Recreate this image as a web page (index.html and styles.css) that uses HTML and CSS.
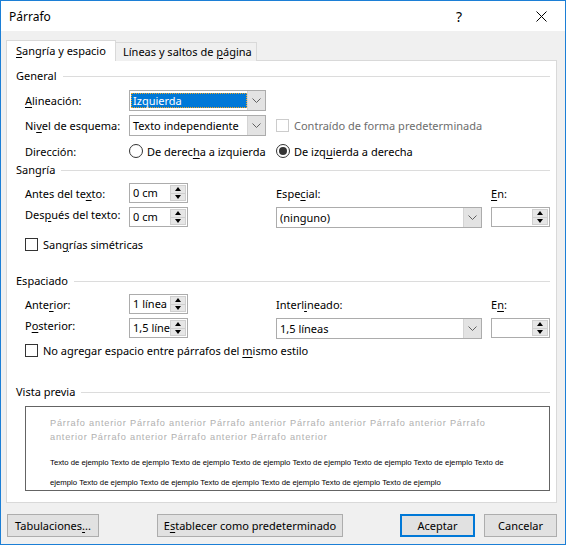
FILE: index.html
```html
<!DOCTYPE html>
<html lang="es">
<head>
<meta charset="utf-8">
<title>Párrafo</title>
<link rel="stylesheet" href="styles.css">
</head>
<body>
<div class="window">
  <div class="titlebar">
    <span class="title">Párrafo</span>
    <span class="help">?</span>
    <span class="close"><svg width="11" height="11" viewBox="0 0 11 11"><path d="M0.5 0.5L10.5 10.5M10.5 0.5L0.5 10.5" stroke="#000" stroke-width="1" fill="none"/></svg></span>
  </div>
  <div class="client">
    <div class="tabs">
      <div class="tab active"><u>S</u>angría y espacio</div>
      <div class="tab">Líneas y saltos de <u>p</u>ágina</div>
    </div>
    <div class="panel">
      <div class="group g-general"><span>General</span><i></i></div>
      <div class="row r-alin">
        <label><u>A</u>lineación:</label>
        <div class="combo w137"><div class="ctext"><span class="sel">Izquierda</span></div><div class="carrow"><svg width="9" height="5" viewBox="0 0 9 5"><path d="M0.5 0.5L4.5 4.5L8.5 0.5" stroke="#606060" fill="none"/></svg></div></div>
      </div>
      <div class="row r-nivel">
        <label>Ni<u>v</u>el de esquema:</label>
        <div class="combo w137"><div class="ctext">Texto independiente</div><div class="carrow"><svg width="9" height="5" viewBox="0 0 9 5"><path d="M0.5 0.5L4.5 4.5L8.5 0.5" stroke="#606060" fill="none"/></svg></div></div>
        <div class="check disabled span2"><span class="box"></span><span>Contraído de forma predeterminada</span></div>
      </div>
      <div class="row r-dir">
        <label>Dirección:</label>
        <div class="radio"><span class="circ"></span><span>De derec<u>h</u>a a izquierda</span></div>
        <div class="radio span2"><span class="circ on"></span><span>De izq<u>u</u>ierda a derecha</span></div>
      </div>
      <div class="group g-sangria"><span>Sangría</span><i></i></div>
      <div class="row r-antes">
        <label>Antes del te<u>x</u>to:</label>
        <div class="spin"><span class="val">0 cm</span><span class="btns"><i class="up"></i><i class="dn"></i></span></div>
        <label>Espe<u>c</u>ial:</label>
        <label><u>E</u>n:</label>
      </div>
      <div class="row r-desp">
        <label>Des<u>p</u>ués del texto:</label>
        <div class="spin"><span class="val">0 cm</span><span class="btns"><i class="up"></i><i class="dn"></i></span></div>
        <div class="combo w206"><div class="ctext">(ninguno)</div><div class="carrow"><svg width="9" height="5" viewBox="0 0 9 5"><path d="M0.5 0.5L4.5 4.5L8.5 0.5" stroke="#606060" fill="none"/></svg></div></div>
        <div class="spin"><span class="val"></span><span class="btns"><i class="up"></i><i class="dn"></i></span></div>
      </div>
      <div class="row r-sim">
        <div class="check span-all"><span class="box"></span><span>San<u>g</u>rías simétricas</span></div>
      </div>
      <div class="group g-esp"><span>Espaciado</span><i></i></div>
      <div class="row r-ant">
        <label>Ante<u>r</u>ior:</label>
        <div class="spin"><span class="val">1 línea</span><span class="btns"><i class="up"></i><i class="dn"></i></span></div>
        <label>Interl<u>i</u>neado:</label>
        <label>E<u>n</u>:</label>
      </div>
      <div class="row r-post">
        <label>P<u>o</u>sterior:</label>
        <div class="spin"><span class="val">1,5 líne</span><span class="btns"><i class="up"></i><i class="dn"></i></span></div>
        <div class="combo w206"><div class="ctext">1,5 líneas</div><div class="carrow"><svg width="9" height="5" viewBox="0 0 9 5"><path d="M0.5 0.5L4.5 4.5L8.5 0.5" stroke="#606060" fill="none"/></svg></div></div>
        <div class="spin"><span class="val"></span><span class="btns"><i class="up"></i><i class="dn"></i></span></div>
      </div>
      <div class="row r-noagr">
        <div class="check span-all"><span class="box"></span><span>No agregar espacio entre párrafos del <u>m</u>ismo estilo</span></div>
      </div>
      <div class="group g-vista"><span>Vista previa</span><i></i></div>
      <div class="preview">
        <div class="pl prev">Párrafo anterior Párrafo anterior Párrafo anterior Párrafo anterior Párrafo anterior Párrafo</div>
        <div class="pl prev">anterior Párrafo anterior Párrafo anterior Párrafo anterior</div>
        <div class="pl sample first">Texto de ejemplo Texto de ejemplo Texto de ejemplo Texto de ejemplo Texto de ejemplo Texto de ejemplo Texto de ejemplo Texto de</div>
        <div class="pl sample">ejemplo Texto de ejemplo Texto de ejemplo Texto de ejemplo Texto de ejemplo Texto de ejemplo Texto de ejemplo</div>
      </div>
    </div>
    <div class="footer">
      <button class="btn b-tab">Tabulaciones<u>.</u>..</button>
      <button class="btn b-est">E<u>s</u>tablecer como predeterminado</button>
      <button class="btn b-ok">Aceptar</button>
      <button class="btn b-cancel">Cancelar</button>
    </div>
  </div>
</div>
</body>
</html>
```

FILE: styles.css
```css
* { box-sizing: border-box; }
html, body { margin: 0; padding: 0; }
body {
  width: 566px;
  height: 545px;
  overflow: hidden;
  font-family: "Noto Sans", "Open Sans", sans-serif;
  font-size: 11px;
  color: #000;
}
u { text-decoration: underline; text-underline-offset: 2px; }
.window {
  width: 566px;
  height: 545px;
  border: 1px solid #1c7fd6;
  background: #f0f0f0;
  display: flex;
  flex-direction: column;
}
.titlebar {
  height: 30px;
  background: #fff;
  display: flex;
  align-items: center;
  padding-left: 8px;
  flex: none;
}
.title { font-size: 12px; flex: 1; margin-top: 1px; }
.help { font-size: 14px; width: 20px; text-align: center; margin-right: 67px; margin-top: 1px; }
.close { width: 11px; height: 11px; margin-right: 18px; display: flex; }

.client { padding: 9px 0 0 5px; }
.tabs {
  display: flex;
  align-items: flex-end;
  height: 21px;
}
.tab {
  height: 19px;
  border: 1px solid #d9d9d9;
  border-bottom: none;
  background: #f0f0f0;
  padding: 0 0 0 7px;
  width: 142px;
  line-height: 17px;
  font-size: 11px;
  white-space: nowrap;
  margin-left: -1px;
}
.tab.active {
  height: 21px;
  width: 110px;
  background: #fff;
  position: relative;
  z-index: 1;
  margin-left: 0;
  padding-left: 9px;
  line-height: 19px;
}
.panel {
  margin-top: -1px;
  width: 551px;
  height: 443px;
  border: 1px solid #d9d9d9;
  background: #fff;
  padding: 0 6px 0 9px;
}
.group {
  display: flex;
  align-items: center;
  height: 16px;
  line-height: 16px;
}
.group span { margin-right: 6px; }
.group i { flex: 1; height: 1px; background: #dcdcdc; }
.g-general { margin-top: 7px; }
.g-sangria { margin-top: 1px; }
.g-esp { margin-top: 21px; }
.g-vista { margin-top: 26px; }

.row {
  display: grid;
  grid-template-columns: 104px 147px 215px 59px;
  align-items: center;
  margin-left: 9px;
}
.row label { white-space: nowrap; }
.r-alin { height: 21px; margin-top: 6px; }
.r-nivel { height: 21px; margin-top: 4px; }
.r-dir { height: 20px; margin-top: 5px; }
.r-antes { height: 20px; margin-top: 5px; }
.r-desp { height: 21px; margin-top: 4px; align-items: start; }
.r-sim { height: 16px; margin-top: 8px; }
.r-ant { height: 20px; margin-top: 5px; }
.r-post { height: 21px; margin-top: 4px; align-items: start; }
.r-noagr { height: 16px; margin-top: 3px; }
.span2 { grid-column: 3 / 5; }
.span-all { grid-column: 1 / 5; }

.combo {
  height: 21px;
  border: 1px solid #acacac;
  background: #fff;
  display: flex;
}
.w137 { width: 137px; }
.w206 { width: 206px; }
.ctext {
  flex: 1;
  padding-left: 3px;
  display: flex;
  align-items: center;
  white-space: nowrap;
  overflow: hidden;
}
.sel {
  display: block;
  width: 117px;
  height: 15px;
  margin-left: -2px;
  line-height: 13px;
  background: #0078d7;
  color: #fff;
  border: 1px dotted #f5a623;
  padding-left: 1px;
}
.carrow {
  width: 18px;
  background: #e3e3e3;
  border-left: 1px solid #d4d4d4;
  display: flex;
  align-items: center;
  justify-content: center;
}

.spin {
  width: 59px;
  height: 20px;
  border: 1px solid #acacac;
  background: #fff;
  display: flex;
}
.spin .val {
  flex: 1;
  padding-left: 3px;
  white-space: nowrap;
  line-height: 18px;
}
.spin .btns {
  width: 16px;
  margin: 1px 1px 1px 0;
  display: flex;
  flex-direction: column;
}
.spin .btns i {
  flex: 1;
  background: #e6e6e6;
  border: 1px solid #cfcfcf;
  display: flex;
  align-items: center;
  justify-content: center;
}
.spin .btns i + i { border-top: none; }
.spin .btns i::after {
  content: "";
  width: 0;
  height: 0;
  border-left: 3.5px solid transparent;
  border-right: 3.5px solid transparent;
}
.spin .btns i.up::after { border-bottom: 4px solid #000; }
.spin .btns i.dn::after { border-top: 4px solid #000; }

.check, .radio {
  display: flex;
  align-items: center;
  white-space: nowrap;
}
.check .box {
  width: 13px;
  height: 13px;
  border: 1px solid #333;
  background: #fff;
  margin-right: 5px;
  flex: none;
}
.check.disabled { color: #6d6d6d; }
.check.disabled .box { border-color: #cccccc; margin-right: 5px; }
.radio .circ {
  width: 14px;
  height: 14px;
  border: 1px solid #333;
  border-radius: 50%;
  margin-right: 4px;
  flex: none;
  display: flex;
  align-items: center;
  justify-content: center;
}
.radio .circ.on::after {
  content: "";
  width: 8px;
  height: 8px;
  border-radius: 50%;
  background: #333;
}

.preview {
  margin: 6px 0 0 9px;
  width: 525px;
  height: 85px;
  border: 1px solid #646464;
  padding: 9px 0 0 24px;
  overflow: hidden;
  font-family: "Liberation Sans", Arial, sans-serif;
}
.pl { white-space: nowrap; }
.prev { color: #b0b0b0; line-height: 14px; font-size: 9.2px; letter-spacing: 0.8px; }
.sample { line-height: 20px; font-size: 7.75px; }
.sample.first { margin-top: 9px; }

.footer {
  display: flex;
  margin-top: 11px;
  height: 23px;
}
.btn {
  height: 23px;
  border: 1px solid #adadad;
  background: #e1e1e1;
  font-family: "Noto Sans", "Open Sans", sans-serif;
  font-size: 11px;
  color: #000;
  padding: 0;
  margin: 0;
}
.b-tab { width: 92px; margin-left: 1px; }
.b-est { width: 186px; margin-left: 58px; }
.b-ok { width: 75px; margin-left: 57px; border: 2px solid #0078d7; }
.b-cancel { width: 73px; margin-left: 9px; }
```
